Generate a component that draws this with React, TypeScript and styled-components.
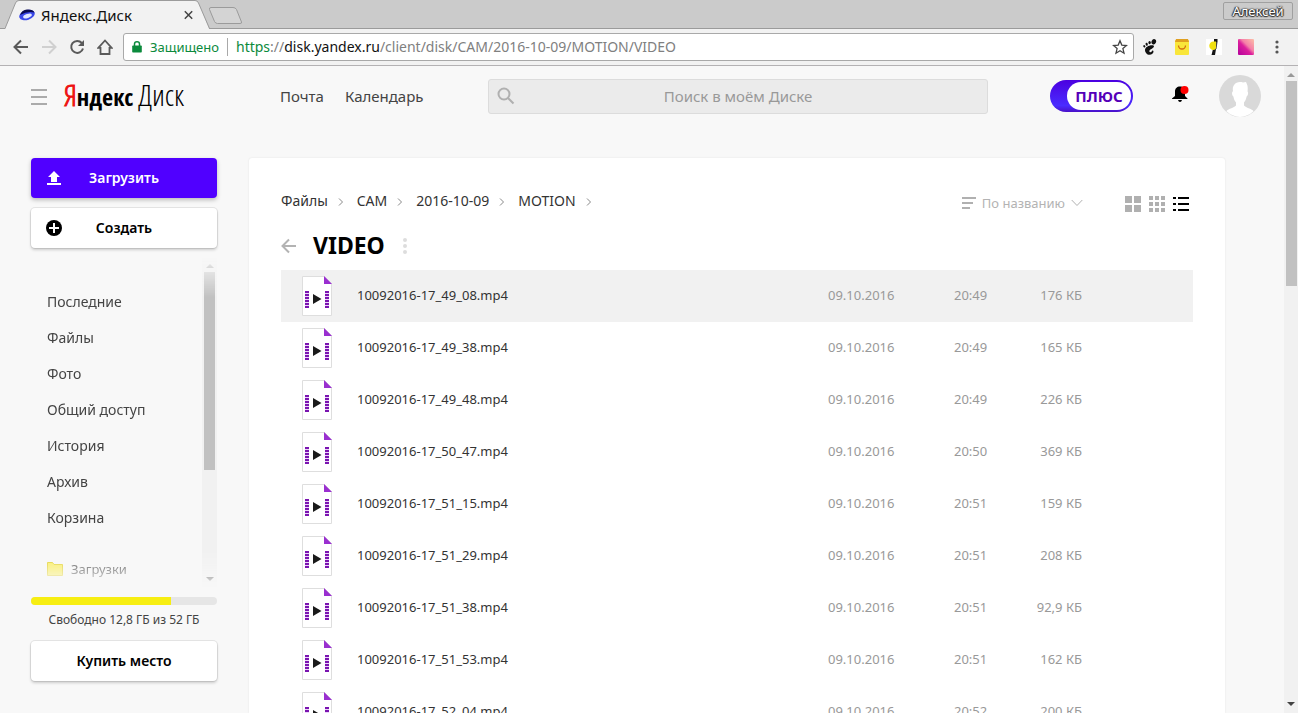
import React from "react";
import styled, { createGlobalStyle, css } from "styled-components";

const sans = `"Noto Sans", "Open Sans", sans-serif`;
const condensedLight = `"Open Sans Condensed Light", "Liberation Sans Narrow", "Liberation Sans", sans-serif`;
const condensedBold = `"Open Sans Condensed", "Liberation Sans Narrow", "Liberation Sans", sans-serif`;

const GlobalStyle = createGlobalStyle`
  *, *::before, *::after { box-sizing: border-box; }
  body { margin: 0; background: #f8f8f8; font-family: ${sans}; color: #444; }
  button, input { font-family: inherit; color: inherit; }
  button { margin: 0; padding: 0; border: 0; background: none; cursor: pointer; }
  a { color: inherit; text-decoration: none; }
  svg { display: block; flex: none; }
`;

/* ---------- browser window ---------- */

const Window = styled.div`
  display: flex;
  flex-direction: column;
  height: 100vh;
  overflow: hidden;
`;

const TabStrip = styled.div`
  display: flex;
  align-items: flex-start;
  height: 29px;
  padding: 0 5px;
  background: #cbcbcb;
  border-bottom: 1px solid #9b9b9b;
`;

const Tab = styled.div`
  position: relative;
  display: flex;
  align-items: center;
  gap: 6px;
  width: 206px;
  height: 29px;
  padding: 0 18px 0 14px;
  font-size: 15px;
  line-height: 20px;
  color: #111;
`;

const TabShape = styled.svg`
  position: absolute;
  inset: 0;
`;

const TabTitle = styled.span`
  position: relative;
  flex: 1;
`;

const TabIcon = styled.svg`
  position: relative;
`;

const TabClose = styled.button`
  position: relative;
  height: 16px;
`;

const NewTab = styled.button`
  margin: 7px 0 0 -3px;
`;

const UserBadge = styled.button`
  height: 18px;
  width: 70px;
  margin: 2px 0 0 auto;
  border: 1px solid #a0a0a0;
  border-radius: 2px;
  font-size: 13px;
  line-height: 16px;
  color: #fff;
  text-shadow: 0 0 2px #222, 0 1px 1px #333, 1px 0 1px #333, -1px 0 1px #333;
`;

const Toolbar = styled.div`
  display: flex;
  align-items: center;
  height: 37px;
  padding: 0 14px 0 13px;
  background: #f2f2f2;
  border-bottom: 1px solid #b4b2b4;
`;

const ToolGroup = styled.div<{ $gap: number }>`
  display: flex;
  align-items: center;
  gap: ${(p) => p.$gap}px;
`;

const AddressBar = styled.div`
  display: flex;
  align-items: center;
  flex: 1;
  height: 28px;
  margin: 0 8px 0 10px;
  padding: 0 5px 0 8px;
  background: #fff;
  border: 1px solid #a9a9a9;
  border-radius: 3px;
  font-size: 14px;
  line-height: 18px;
  color: #808080;
`;

const Secure = styled.span`
  margin: 0 8px;
  padding-right: 8px;
  border-right: 1px solid #a9a9a9;
  font-size: 13px;
  color: #0b8a3c;
`;

const Url = styled.span`
  flex: 1;
  b { font-weight: 400; color: #111; }
  i { font-style: normal; color: #0b8a3c; }
`;

const Viewport = styled.div`
  display: flex;
  flex: 1;
  min-height: 0;
`;

const ScrollTrack = styled.div<{ $width: number }>`
  display: flex;
  flex-direction: column;
  flex: none;
  align-items: center;
  width: ${(p) => p.$width}px;
  padding: 7px 0;
  background: #f1f1f1;
`;

const ScrollThumb = styled.div<{ $share: number }>`
  flex: ${(p) => p.$share} 0 0;
  width: 11px;
  margin-top: 4px;
  background: #c1c1c1;
`;

const ScrollRest = styled.div<{ $share: number }>`
  flex: ${(p) => p.$share} 0 0;
`;

/* ---------- page ---------- */

const Page = styled.div`
  display: flex;
  flex-direction: column;
  flex: 1;
  min-width: 0;
  background: #f8f8f8;
`;

const Header = styled.header`
  display: flex;
  align-items: center;
  flex: none;
  height: 60px;
  padding: 0 23px 0 31px;
`;

const MenuButton = styled.button`
  padding-top: 2px;
`;

const Logo = styled.a`
  display: flex;
  align-items: baseline;
  width: 216px;
  margin-left: 17px;
  font-family: ${condensedLight};
  font-size: 30px;
  line-height: 32px;
  color: #000;
  white-space: nowrap;
`;

const LogoInitial = styled.span`
  color: #e11;
  -webkit-text-stroke: 1px #e11;
`;

const LogoBrand = styled.b`
  margin-right: 5px;
  font-family: ${condensedBold};
  font-size: 24px;
`;

const NavLinks = styled.nav`
  display: flex;
  gap: 21px;
  width: 208px;
  font-size: 15px;
  line-height: 20px;
`;

const Search = styled.label`
  position: relative;
  width: 500px;
  margin-right: auto;
  svg { position: absolute; left: 9px; top: 8px; }
`;

const SearchInput = styled.input`
  display: block;
  width: 100%;
  height: 35px;
  padding: 0 8px;
  border: 1px solid #dcdcdc;
  border-radius: 3px;
  background: #ebebeb;
  font-size: 15px;
  text-align: center;
  &::placeholder { color: #999; opacity: 1; }
`;

const PlusButton = styled.button`
  display: flex;
  width: 83px;
  height: 32px;
  padding: 2px 2px 2px 17px;
  border-radius: 16px;
  background: linear-gradient(#4b00e0, #4a2cff 80%, #4a10c8);
`;

const PlusLabel = styled.span`
  flex: 1;
  border-radius: 14px;
  background: #fff;
  font-size: 15px;
  font-weight: 700;
  line-height: 28px;
  color: #5500b8;
`;

const Bell = styled.button`
  margin: 0 30px 0 39px;
  padding-bottom: 4px;
`;

const Body = styled.div`
  display: flex;
  flex: 1;
  gap: 32px;
  min-height: 0;
  padding: 32px 59px 0 31px;
`;

const Sidebar = styled.aside`
  display: flex;
  flex-direction: column;
  flex: none;
  width: 186px;
  padding-bottom: 32px;
`;

const SideButton = styled.button<{ $primary?: boolean }>`
  display: flex;
  align-items: center;
  flex: none;
  height: 40px;
  padding: 0 15px;
  border-radius: 4px;
  background: #fff;
  box-shadow: 0 0 0 1px rgba(0, 0, 0, 0.08), 0 2px 3px rgba(0, 0, 0, 0.18);
  font-size: 14px;
  font-weight: 600;
  color: #000;
  span { flex: 1; padding-bottom: 2px; }
  svg + span { padding-right: 16px; }
  & + & { margin-top: 10px; }
  ${(p) =>
    p.$primary &&
    css`
      background: #5000ff;
      box-shadow: 0 2px 4px rgba(0, 0, 0, 0.25);
      color: #fff;
    `}
`;

const Folders = styled.div`
  display: flex;
  flex: 1;
  min-height: 0;
  margin: 9px 0;
  overflow: hidden;
  mask-image: linear-gradient(transparent, #000 40px, #000 calc(100% - 36px), transparent);
`;

const FolderList = styled.nav`
  flex: 1;
  padding: 26px 0 0 16px;
`;

const FolderLink = styled.a<{ $apart?: boolean }>`
  display: flex;
  align-items: center;
  gap: 8px;
  height: 36px;
  margin-top: ${(p) => (p.$apart ? 16 : 0)}px;
  font-size: ${(p) => (p.$apart ? 13 : 14)}px;
`;

const Meter = styled.div`
  flex: none;
  height: 8px;
  border-radius: 4px;
  background: #e6e6e6;
  overflow: hidden;
`;

const MeterFill = styled.div`
  height: 100%;
  background: #f7ee12;
`;

const FreeSpace = styled.p`
  margin: 6px 0 12px;
  font-size: 12px;
  line-height: 18px;
  text-align: center;
`;

const Panel = styled.main`
  flex: 1;
  min-width: 0;
  padding: 32px;
  border-radius: 3px 3px 0 0;
  background: #fff;
  box-shadow: 0 0 2px rgba(0, 0, 0, 0.1);
  overflow: hidden;
`;

const PanelTop = styled.div`
  display: flex;
  align-items: center;
  justify-content: space-between;
  height: 24px;
`;

const Crumbs = styled.nav`
  display: flex;
  align-items: center;
  padding-bottom: 2px;
  font-size: 14px;
  line-height: 20px;
  color: #333;
  svg { margin: 2px 13px 0 10px; }
`;

const ViewTools = styled.div`
  display: flex;
  align-items: center;
  gap: 8px;
  padding: 4px 4px 0 0;
`;

const Sort = styled.button`
  display: flex;
  align-items: center;
  gap: 6px;
  margin-right: 34px;
  padding-bottom: 2px;
  font-size: 13px;
  line-height: 20px;
  color: #b3b3b3;
`;

const TitleRow = styled.div`
  display: flex;
  align-items: center;
  height: 40px;
  margin: 12px 0 4px;
`;

const Title = styled.h1`
  margin: 0 18px 0 16px;
  padding-bottom: 2px;
  font-size: 23px;
  line-height: 32px;
  font-weight: 700;
  color: #000;
`;

const FileTable = styled.table`
  width: 100%;
  border-collapse: collapse;
  table-layout: fixed;
  font-size: 13px;
  line-height: 18px;
  color: #999;
`;

const Row = styled.tr<{ $active: boolean }>`
  height: 52px;
  background: ${(p) => (p.$active ? "#f1f1f1" : "transparent")};
`;

const Cell = styled.td<{ $width?: number; $end?: number }>`
  width: ${(p) => (p.$width ? `${p.$width}px` : "auto")};
  padding: 0 ${(p) => p.$end ?? 0}px ${(p) => (p.$width ? 2 : 0)}px 0;
  text-align: ${(p) => (p.$end ? "right" : "left")};
  white-space: nowrap;
`;

const FileName = styled.a`
  display: flex;
  align-items: center;
  gap: 25px;
  padding-left: 21px;
  color: #333;
  span { padding-bottom: 2px; }
`;

/* ---------- icons ---------- */

const Arrow = ({ color, flip }: { color: string; flip?: boolean }) => (
  <svg width="16" height="16" viewBox="0 0 16 16" fill="none" stroke={color} strokeWidth="2">
    <path d={flip ? "M1 8H14M8 1.500L14.500 8 8 14.500" : "M15 8H2M8 1.500L1.500 8 8 14.500"} />
  </svg>
);

const Triangle = ({ down, color }: { down?: boolean; color: string }) => (
  <svg width="8" height="4" viewBox="0 0 8 4" fill={color}>
    <path d={down ? "M0 0h8L4 4z" : "M4 0l4 4H0z"} />
  </svg>
);

const Chevron = () => (
  <svg width="6" height="8" viewBox="0 0 6 8" fill="none" stroke="#888">
    <path d="M1 .5L4.500 4 1 7.500" />
  </svg>
);

const VideoIcon = () => (
  <svg width="30" height="40" viewBox="0 0 30 40">
    <path d="M.5.5H22.500L29.500 7.500V39.500H.5z" fill="#fff" stroke="#dedede" />
    <path d="M22 0l8 8h-8z" fill="#9a2fd0" />
    <path d="M3 15h4v17H3zM23 15h4v17h-4z" fill="#ecd2fa" />
    {[15, 18, 21, 24, 27, 30].map((y) => (
      <path key={y} d={`M3 ${y}h4v2H3zM23 ${y}h4v2h-4z`} fill="#7a14b0" />
    ))}
    <path d="M11 18l8.500 5L11 28z" fill="#1a1a1a" />
  </svg>
);

/* ---------- data ---------- */

const folders = ["Последние", "Файлы", "Фото", "Общий доступ", "История", "Архив", "Корзина"];
const crumbs = ["Файлы", "CAM", "2016-10-09", "MOTION"];
const files = [
  ["10092016-17_49_08.mp4", "20:49", "176 КБ"],
  ["10092016-17_49_38.mp4", "20:49", "165 КБ"],
  ["10092016-17_49_48.mp4", "20:49", "226 КБ"],
  ["10092016-17_50_47.mp4", "20:50", "369 КБ"],
  ["10092016-17_51_15.mp4", "20:51", "159 КБ"],
  ["10092016-17_51_29.mp4", "20:51", "208 КБ"],
  ["10092016-17_51_38.mp4", "20:51", "92,9 КБ"],
  ["10092016-17_51_53.mp4", "20:51", "162 КБ"],
  ["10092016-17_52_04.mp4", "20:52", "200 КБ"],
];

const BrowserChrome = () => (
  <>
    <TabStrip>
      <Tab>
        <TabShape width="206" height="29" viewBox="0 0 206 29">
          <path d="M0 29L10.500 3Q11.500 .5 14 .5H190Q192.500 .5 193.500 3L204 28.500V29z" fill="#f2f2f2" />
          <path d="M0 28.500L10.500 3Q11.500 .5 14 .5H190Q192.500 .5 193.500 3L204.500 28.500" fill="none" stroke="#9b9b9b" />
        </TabShape>
        <TabIcon width="16" height="12" viewBox="0 0 16 12">
          <ellipse cx="8" cy="6" rx="8" ry="5" transform="rotate(-18 8 6)" fill="#3a48e8" />
          <path d="M1 6Q3 1 8 .6 14 .3 15.500 3.500 9 1.500 1 6z" fill="#0a0a50" />
          <ellipse cx="8.500" cy="7" rx="4.500" ry="2" transform="rotate(-18 8.500 7)" fill="#dfe6ff" />
        </TabIcon>
        <TabTitle>Яндекс.Диск</TabTitle>
        <TabClose aria-label="Закрыть вкладку">
          <svg width="9" height="16" viewBox="0 0 9 16" stroke="#444" strokeWidth="1.500">
            <path d="M.8 4.300l7.400 7.400M8.200 4.300L.8 11.700" />
          </svg>
        </TabClose>
      </Tab>
      <NewTab aria-label="Новая вкладка">
        <svg width="36" height="18" viewBox="0 0 36 18" fill="#d4d4d4" stroke="#9b9b9b">
          <path d="M3 .5H25Q27.500.5 28.500 2.500L33.500 15Q34 16.500 32 16.500H9.500Q7.500 16.500 6.500 14.500L1.500 2.500Q1 .5 3 .5z" />
        </svg>
      </NewTab>
      <UserBadge>Алексей</UserBadge>
    </TabStrip>
    <Toolbar>
      <ToolGroup $gap={12}>
        <button aria-label="Назад"><Arrow color="#5a5a5a" /></button>
        <button aria-label="Вперёд"><Arrow color="#d0d0d0" flip /></button>
        <button aria-label="Обновить">
          <svg width="16" height="16" viewBox="0 0 16 16">
            <path d="M12.800 4A6 6 0 1 0 14 9.500" fill="none" stroke="#5a5a5a" strokeWidth="2" />
            <path d="M15 1v6H9z" fill="#5a5a5a" />
          </svg>
        </button>
        <button aria-label="Домой">
          <svg width="16" height="16" viewBox="0 0 16 16" fill="none" stroke="#5a5a5a" strokeWidth="1.800">
            <path d="M1.300 8.800L8 1.500l6.700 7.300H12.500V15h-9V8.800z" />
          </svg>
        </button>
      </ToolGroup>
      <AddressBar>
        <svg width="10" height="12" viewBox="0 0 10 12">
          <path d="M1 4.500h8q.8 0 .8.800v5.500q0 .8-.8.800H1q-.8 0-.8-.8V5.300q0-.8.800-.8z" fill="#0b8a3c" />
          <path d="M2.500 5V3a2.500 2.200 0 0 1 5 0v2" fill="none" stroke="#0b8a3c" strokeWidth="1.500" />
        </svg>
        <Secure>Защищено</Secure>
        <Url><i>https</i>://<b>disk.yandex.ru</b>/client/disk/CAM/2016-10-09/MOTION/VIDEO</Url>
        <button aria-label="Добавить в закладки">
          <svg width="16" height="16" viewBox="0 0 16 16" fill="none" stroke="#444" strokeWidth="1.300">
            <path d="M8 1.700l1.800 4.400 4.700.4-3.600 3.100 1.100 4.600L8 11.700l-4 2.500 1.100-4.600L1.500 6.500l4.700-.4z" />
          </svg>
        </button>
      </AddressBar>
      <ToolGroup $gap={16}>
        <svg width="16" height="16" viewBox="0 0 16 16" fill="#111">
          <ellipse cx="11.800" cy="2.800" rx="2.200" ry="2.700" transform="rotate(25 11.800 2.800)" />
          <ellipse cx="7.600" cy="3.600" rx="1.200" ry="1.700" />
          <ellipse cx="4.700" cy="5.200" rx="1.100" ry="1.500" transform="rotate(-15 4.700 5.200)" />
          <ellipse cx="2.300" cy="7.300" rx="1" ry="1.300" transform="rotate(-30 2.300 7.300)" />
          <path d="M11.500 6.500C8 5.500 3 8 3 11c0 2.500 2 4.800 4.500 4.800 2.300 0 4-1.500 4-3.300 0-1-1-1.300-1.500-.6-.5.900-1.300 1.500-2.200 1.100-1-.5-.5-2 1-2.700 1.800-.8 4.200-2.800 2.700-3.800z" />
        </svg>
        <svg width="16" height="16" viewBox="0 0 16 16">
          <rect x="1" y="1" width="14" height="15" rx="1" fill="#f9e63a" />
          <path d="M2 0h12l1 3H1z" fill="#e0a020" />
          <path d="M4.500 6.500a3.500 3.500 0 0 0 7 0" fill="none" stroke="#d06a10" strokeWidth="1.300" />
        </svg>
        <svg width="16" height="16" viewBox="0 0 16 16">
          <path d="M0 0h16v16H0z" fill="#fff" />
          <path d="M8 0h3.500v3H8zM7 10h3l-1 6H5.500z" fill="#151515" />
          <path d="M10 3h1.500l-1 7H9z" fill="#444" />
          <path d="M7.500 2.500h2.500v6.500q-.5 2-2.500 2a4.200 4.200 0 0 1 0-8.500z" fill="#f0e010" />
        </svg>
        <svg width="16" height="16" viewBox="0 0 16 16">
          <defs>
            <linearGradient id="swatch" x1="0" y1="1" x2="1" y2="0">
              <stop offset="0" stopColor="#b4009c" />
              <stop offset=".45" stopColor="#dc1f9c" />
              <stop offset=".6" stopColor="#f57fa8" />
              <stop offset="1" stopColor="#fcc0a8" />
            </linearGradient>
          </defs>
          <rect width="16" height="16" rx="1" fill="url(#swatch)" />
        </svg>
        <button aria-label="Меню браузера">
          <svg width="14" height="16" viewBox="0 0 14 16" fill="#555">
            <circle cx="7" cy="3" r="1.600" /><circle cx="7" cy="8" r="1.600" /><circle cx="7" cy="13" r="1.600" />
          </svg>
        </button>
      </ToolGroup>
    </Toolbar>
  </>
);

const PageHeader = () => (
  <Header>
    <MenuButton aria-label="Меню">
      <svg width="16" height="16" viewBox="0 0 16 16" fill="#ababab">
        <path d="M0 0h16v2H0zM0 7h16v2H0zM0 14h16v2H0z" />
      </svg>
    </MenuButton>
    <Logo href="#"><LogoInitial>Я</LogoInitial><LogoBrand>ндекс</LogoBrand><span>Диск</span></Logo>
    <NavLinks>
      <a href="#">Почта</a>
      <a href="#">Календарь</a>
    </NavLinks>
    <Search>
      <svg width="18" height="18" viewBox="0 0 18 18" fill="none" stroke="#b0b0b0" strokeWidth="2">
        <circle cx="7" cy="7" r="5.500" /><path d="M11 11l5.500 5.500" />
      </svg>
      <SearchInput type="text" aria-label="Поиск" placeholder="Поиск в моём Диске" />
    </Search>
    <PlusButton><PlusLabel>ПЛЮС</PlusLabel></PlusButton>
    <Bell aria-label="Уведомления">
      <svg width="17" height="18" viewBox="0 0 17 18">
        <path d="M8 1.500c3 0 5 2 5 5V11l2.500 2.500V14H0v-.5L3 11V6.500c0-3 2-5 5-5zM6 15h4q-.5 2-2 2t-2-2z" fill="#000" />
        <circle cx="12.500" cy="5" r="4" fill="#f00" />
      </svg>
    </Bell>
    <button aria-label="Профиль">
      <svg width="42" height="42" viewBox="0 0 42 42">
        <circle cx="21" cy="21" r="21" fill="#d9d9d9" />
        <path d="M14 16c-1-5 2-9 7-9 1 0 2 0 3 .6l3-.6c.5 1 .8 2 1.400 3.500.5 2 .3 4 .2 6 1 1 .5 4-1 5-.4 2.500-1.400 4.500-2.600 6v3c3 3 8 3 9.500 5.800A21 21 0 0 1 21 42a21 21 0 0 1-13.500-5.700C9 33.500 14 33.500 17 30.500v-3c-1.200-1.500-2.200-3.500-2.600-6-1.500-1-2-4-.4-5.500z" fill="#fff" />
      </svg>
    </button>
  </Header>
);

const SidePanel = () => (
  <Sidebar>
    <SideButton $primary>
      <svg width="16" height="16" viewBox="0 0 16 16" fill="#fff">
        <path d="M8 1l6 6h-3v5H5V7H2zM1 13h14v2H1z" />
      </svg>
      <span>Загрузить</span>
    </SideButton>
    <SideButton>
      <svg width="16" height="16" viewBox="0 0 16 16">
        <circle cx="8" cy="8" r="8" />
        <path d="M7 3h2v4h4v2H9v4H7V9H3V7h4z" fill="#fff" />
      </svg>
      <span>Создать</span>
    </SideButton>
    <Folders>
      <FolderList>
        {folders.map((name) => <FolderLink href="#" key={name}>{name}</FolderLink>)}
        <FolderLink href="#" $apart>
          <svg width="16" height="14" viewBox="0 0 16 14" fill="#fbee50" stroke="#e2cf1c">
            <path d="M.5.5h5l1.500 2h8.500v11H.5z" />
          </svg>
          Загрузки
        </FolderLink>
      </FolderList>
      <ScrollTrack $width={15}>
        <Triangle color="#888" />
        <ScrollThumb $share={196} />
        <ScrollRest $share={106} />
        <Triangle down color="#333" />
      </ScrollTrack>
    </Folders>
    <Meter role="progressbar" aria-label="Занято места" aria-valuenow={75}>
      <MeterFill style={{ width: "75%" }} />
    </Meter>
    <FreeSpace>Свободно 12,8 ГБ из 52 ГБ</FreeSpace>
    <SideButton><span>Купить место</span></SideButton>
  </Sidebar>
);

const FilesPanel = () => (
  <Panel>
    <PanelTop>
      <Crumbs>
        {crumbs.map((name) => (
          <React.Fragment key={name}><a href="#">{name}</a><Chevron /></React.Fragment>
        ))}
      </Crumbs>
      <ViewTools>
        <Sort>
          <svg width="14" height="14" viewBox="0 0 14 14" fill="#b0b0b0">
            <path d="M0 1h14v2H0zM0 6h11v2H0zM0 11h8v2H0z" />
          </svg>
          По названию
          <svg width="12" height="8" viewBox="0 0 12 8" fill="none" stroke="#b0b0b0">
            <path d="M.7 1L6 6.500 11.300 1" />
          </svg>
        </Sort>
        <button aria-label="Крупная плитка">
          <svg width="16" height="16" viewBox="0 0 16 16" fill="#b0b0b0">
            <path d="M0 0h7v7H0zM9 0h7v7H9zM0 9h7v7H0zM9 9h7v7H9z" />
          </svg>
        </button>
        <button aria-label="Плитка">
          <svg width="16" height="16" viewBox="0 0 16 16" fill="#b0b0b0">
            {[0, 6, 12].map((y) => <path key={y} d={`M0 ${y}h4v4H0zM6 ${y}h4v4H6zM12 ${y}h4v4h-4z`} />)}
          </svg>
        </button>
        <button aria-label="Список">
          <svg width="16" height="16" viewBox="0 0 16 16">
            <path d="M0 1h3v2H0zM5 1h11v2H5zM0 7h3v2H0zM5 7h11v2H5zM0 13h3v2H0zM5 13h11v2H5z" />
          </svg>
        </button>
      </ViewTools>
    </PanelTop>
    <TitleRow>
      <button aria-label="Вверх"><Arrow color="#b3b3b3" /></button>
      <Title>VIDEO</Title>
      <button aria-label="Ещё">
        <svg width="4" height="16" viewBox="0 0 4 16" fill="#ddd">
          <circle cx="2" cy="2" r="2" /><circle cx="2" cy="8" r="2" /><circle cx="2" cy="14" r="2" />
        </svg>
      </button>
    </TitleRow>
    <FileTable aria-label="Файлы в папке VIDEO">
      <tbody>
        {files.map(([name, time, size], i) => (
          <Row key={name} $active={i === 0}>
            <Cell><FileName href="#"><VideoIcon /><span>{name}</span></FileName></Cell>
            <Cell $width={126}>09.10.2016</Cell>
            <Cell $width={60}>{time}</Cell>
            <Cell $width={179} $end={111}>{size}</Cell>
          </Row>
        ))}
      </tbody>
    </FileTable>
  </Panel>
);

export default function App() {
  return (
    <Window>
      <GlobalStyle />
      <BrowserChrome />
      <Viewport>
        <Page>
          <PageHeader />
          <Body>
            <SidePanel />
            <FilesPanel />
          </Body>
        </Page>
        <ScrollTrack $width={14}>
          <Triangle color="#999" />
          <ScrollThumb $share={204} />
          <ScrollRest $share={415} />
          <Triangle down color="#444" />
        </ScrollTrack>
      </Viewport>
    </Window>
  );
}
